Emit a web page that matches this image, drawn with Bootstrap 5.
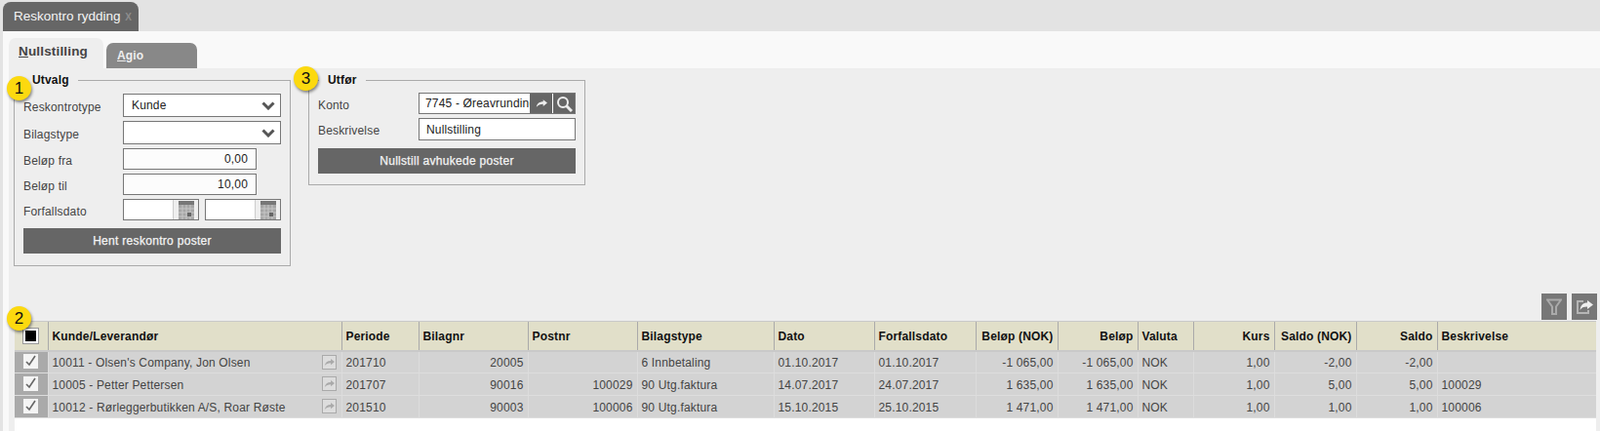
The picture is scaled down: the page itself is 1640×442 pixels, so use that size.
<!DOCTYPE html>
<html lang="nb">

<head>
  <meta charset="UTF-8">
  <meta name="viewport" content="width=device-width, initial-scale=1.0">
  <title>Reskontro rydding</title>
  <link rel="stylesheet" href="https://cdn.jsdelivr.net/npm/bootstrap@5.3.0/dist/css/bootstrap.min.css">
  <style>
    html, body { height: 100%; }
    body { background: #e3e3e3; font: 12px/14px "Liberation Sans", Arial, sans-serif; letter-spacing: .17px; color: #333; overflow: hidden; }

    /* top tab strip */
    .top-strip { height: 32px; padding: 2px 0 0 3px; }
    .top-tab { width: 139px; height: 30px; background: #666; color: #f4f4f4; border-radius: 8px 8px 0 0; font-size: 13.5px; letter-spacing: 0; line-height: 29px; padding-left: 11px; white-space: nowrap; }
    .top-tab .tab-x { color: #8d8d8d; font-size: 10px; font-weight: bold; margin-left: 1px; }

    .pane { margin-left: 3px; height: 410px; background: #f9f9f9; padding-left: 6px; }

    /* sub tabs */
    .sub-tabs { height: 38px; padding-top: 7px; border: 0; gap: 3px; align-items: flex-end; flex-wrap: nowrap; }
    .sub-tabs .nav-link { border: 0; border-radius: 7px 7px 0 0; margin: 0; }
    .sub-tabs .nav-link u { text-underline-offset: 1px; }
    .sub-tabs .tab-on { width: 97px; height: 31px; background: #eee; color: #444; font: bold 13.5px/28px "Liberation Sans", Arial, sans-serif; padding: 0 0 0 10px; }
    .sub-tabs .tab-off { width: 93px; height: 26px; background: #888; color: #eee; font: bold 12px/26px "Liberation Sans", Arial, sans-serif; padding: 0 0 0 11px; }

    .main-area { background: #eee; height: 372px; padding: 5px 0 0 5px; }

    /* the two boxes */
    .box { border: 1px solid #aaa; width: 284px; padding: 0 9px 0 9px; margin: 0; }
    .box-utvalg { height: 198px; }
    .box-utfor { width: 284px; height: 115px; margin-left: 18px; }
    .box legend { float: none; width: auto; font: bold 12px/14px "Liberation Sans", Arial, sans-serif; letter-spacing: .17px; color: #111; margin: 0 0 7px 0; padding: 0 9px 0 9px; }
    .box-utfor legend { margin-left: 1px; margin-bottom: 6px; }
    .field-row { display: flex; align-items: center; margin-bottom: 4px; color: #444; }
    .field-row label { width: 102px; flex: none; margin: 0; padding-top: 3px; }
    .box-utfor .field-row label { width: 103px; }

    .box .form-control, .box .form-select { border: 1px solid #777; border-radius: 0; font: 12px/14px "Liberation Sans", Arial, sans-serif; letter-spacing: .17px; color: #222; padding: 0 8px; box-shadow: none; min-height: 0; }
    .box .form-select { height: 24px; width: 162px; background-size: 14px 9px; background-position: right 5px center; background-image: url("data:image/svg+xml,%3csvg xmlns='http://www.w3.org/2000/svg' viewBox='0 0 14 9'%3e%3cpath fill='none' stroke='%23555' stroke-width='3' d='M1.5 1.5 7 7l5.5-5.5'/%3e%3c/svg%3e"); }
    .amount { width: 137px !important; height: 22px; text-align: right; background: #fcfcfc; }
    .date-input { width: 78px; height: 22px; border: 1px solid #777; background: #fff; display: flex; justify-content: flex-end; }
    .date-input + .date-input { margin-left: 6px; }
    .date-input span { width: 26px; background: #eee; border-left: 1px solid #ccc; display: flex; align-items: center; justify-content: center; }
    .dark-btn { background: #666; border: 0; border-radius: 0; color: #f4f4f4; font: 12px/26px "Liberation Sans", Arial, sans-serif; letter-spacing: .3px; -webkit-text-stroke: .25px #f4f4f4; height: 26px; width: 264px; padding: 0; display: block; }
    .dark-btn:hover { background: #666; color: #f4f4f4; }
    .lookup { width: 161px; height: 22px; border: 1px solid #777; background: #fff; display: flex; overflow: hidden; }
    .lookup input { border: 0 !important; height: 20px; width: 113px !important; flex: none; padding: 0 0 0 6px !important; }
    .lookup span { background: #666; width: 23px; display: flex; align-items: center; justify-content: center; }
    .lookup span + span { border-left: 1px solid #fff; }
    .lookup-text { width: 161px !important; height: 23px; padding-left: 7px !important; }

    /* numbered callouts */
    .callout { position: absolute; width: 25px; height: 25px; border-radius: 50%; background: #fcd90f; box-shadow: 1px 2px 3px rgba(0,0,0,.45); color: #111; font-size: 17px; line-height: 25px; text-align: center; z-index: 5; }
    .call-1 { left: 7px; top: 78px; }
    .call-2 { left: 7px; top: 314px; }
    .call-3 { left: 301px; top: 68px; }

    /* grid */
    .grid-tools { margin-top: 28px; height: 28px; justify-content: flex-end; gap: 5px; padding-right: 3px; }
    .grid-tools .tool-btn { width: 26px; height: 27px; background: #777; display: flex; align-items: center; justify-content: center; }
    .grid-wrap { margin-left: 1px; width: 1621px; background: #fff; height: 114px; }
    .grid { table-layout: fixed; width: 100%; margin: 0; font-size: 12px; color: #444; }
    .grid > :not(caption) > * > * { padding: 0 4px; background: transparent; box-shadow: none; white-space: nowrap; vertical-align: middle; border: 0; overflow: hidden; }
    .grid thead th { height: 30px; background: #e1dfc9; color: #111; font-weight: bold; border-top: 1px solid #c9c9c9; border-bottom: 2px solid #c9c9c9; border-left: 1px solid #aaa; padding-top: 1px; }
    .grid tbody td { height: 23px; background: #d3d3d3; border-bottom: 1px solid #ddd; border-left: 1px solid #dcdcdc; padding-top: 1px; }
    .grid th:nth-child(1) { width: 34px; }
    .grid th:nth-child(2) { width: 301px; }
    .grid th:nth-child(3) { width: 79px; }
    .grid th:nth-child(4), .grid th:nth-child(5) { width: 112px; }
    .grid th:nth-child(6) { width: 140px; }
    .grid th:nth-child(7) { width: 103px; }
    .grid th:nth-child(8) { width: 104px; }
    .grid th:nth-child(9) { width: 84px; }
    .grid th:nth-child(10) { width: 82px; }
    .grid th:nth-child(11) { width: 57px; }
    .grid th:nth-child(12), .grid th:nth-child(14) { width: 83px; }
    .grid th:nth-child(13) { width: 84px; }
    .grid .num { text-align: right; }
    .grid tbody .cell-check { background: #aaa; padding: 0 0 2px; text-align: center; border-left: 0; }
    .grid thead .cell-check { background: #e1dfc9; border-left: 0; padding: 0; text-align: center; }
    .grid .cell-name { position: relative; }
    .check-box { display: inline-flex; width: 15px; height: 15px; background: #f4f4f4; align-items: center; justify-content: center; vertical-align: middle; }
    .check-all { display: inline-block; width: 17px; height: 17px; border: 1px solid #999; background: #fff; padding: 2px; vertical-align: middle; }
    .check-all i { display: block; width: 11px; height: 11px; background: #000; }
    .row-link { position: absolute; right: 5px; top: 3px; width: 15px; height: 15px; border: 1px solid #aaa; background: #ddd; display: flex; align-items: center; justify-content: center; }
  </style>
</head>

<body>

  <div class="top-strip">
    <div class="top-tab">Reskontro rydding <span class="tab-x">X</span></div>
  </div>

  <div class="pane">
    <ul class="nav nav-tabs sub-tabs">
      <li class="nav-item"><a class="nav-link tab-on" href="#"><u>N</u>ullstilling</a></li>
      <li class="nav-item"><a class="nav-link tab-off" href="#"><u>A</u>gio</a></li>
    </ul>

    <div class="main-area">
      <div class="d-flex align-items-start">
        <fieldset class="box box-utvalg">
          <legend>Utvalg</legend>
          <div class="field-row">
            <label for="rtype">Reskontrotype</label>
            <select class="form-select" id="rtype"><option>Kunde</option></select>
          </div>
          <div class="field-row">
            <label for="btype">Bilagstype</label>
            <select class="form-select" id="btype"><option></option></select>
          </div>
          <div class="field-row">
            <label for="fra">Beløp fra</label>
            <input class="form-control amount" id="fra" value="0,00">
          </div>
          <div class="field-row">
            <label for="til">Beløp til</label>
            <input class="form-control amount" id="til" value="10,00">
          </div>
          <div class="field-row mb-2">
            <label>Forfallsdato</label>
            <div class="date-input"><span><svg width="16" height="19" viewBox="0 0 16 19"><rect width="16" height="19" fill="#a5a5a5"/><rect width="16" height="4" fill="#777"/><path d="M0 8h16M0 12h16M0 16h16M4 4v15M8 4v15M12 4v15" stroke="#c6c6c6"/><rect x="9" y="12" width="4" height="4" fill="#666"/></svg></span></div>
            <div class="date-input"><span><svg width="16" height="19" viewBox="0 0 16 19"><rect width="16" height="19" fill="#a5a5a5"/><rect width="16" height="4" fill="#777"/><path d="M0 8h16M0 12h16M0 16h16M4 4v15M8 4v15M12 4v15" stroke="#c6c6c6"/><rect x="9" y="12" width="4" height="4" fill="#666"/></svg></span></div>
          </div>
          <button type="button" class="btn dark-btn">Hent reskontro poster</button>
        </fieldset>

        <fieldset class="box box-utfor">
          <legend>Utfør</legend>
          <div class="field-row">
            <label for="konto">Konto</label>
            <div class="lookup">
              <input class="form-control" id="konto" value="7745 - Øreavrunding">
              <span><svg width="12" height="8" viewBox="0 0 14 9"><path fill="#eee" d="M9 0l5 4-5 4V5.500C5.500 5.500 3 6.500 1 9c.5-4 3.500-6.500 8-6.500z"/></svg></span>
              <span><svg width="17" height="17" viewBox="0 0 17 17"><circle cx="7" cy="7" r="5" fill="none" stroke="#eee" stroke-width="2"/><path d="M10.500 10.500 16 16" stroke="#eee" stroke-width="3"/></svg></span>
            </div>
          </div>
          <div class="field-row mb-2">
            <label for="besk">Beskrivelse</label>
            <input class="form-control lookup-text" id="besk" value="Nullstilling">
          </div>
          <button type="button" class="btn dark-btn">Nullstill avhukede poster</button>
        </fieldset>
      </div>

      <div class="d-flex grid-tools">
        <div class="tool-btn"><svg width="16" height="17" viewBox="0 0 16 17"><path fill="none" stroke="#aaa" stroke-width="2" d="M1 1.500h14L10 8.500V16H6V8.500z"/></svg></div>
        <div class="tool-btn"><svg width="18" height="17" viewBox="0 0 18 17"><path fill="none" stroke="#b5b5b5" stroke-width="2" d="M13 12v3H2V3h6"/><path fill="#eee" d="M12 2l6 4.500-6 4.500V8.500C8 8.500 6 9.500 4.500 12c.5-5 3-7.500 7.500-7.500z"/></svg></div>
      </div>

      <div class="grid-wrap">
        <table class="table grid">
          <thead>
            <tr>
              <th class="cell-check"><span class="check-all"><i></i></span></th>
              <th>Kunde/Leverandør</th>
              <th>Periode</th>
              <th>Bilagnr</th>
              <th>Postnr</th>
              <th>Bilagstype</th>
              <th>Dato</th>
              <th>Forfallsdato</th>
              <th class="num">Beløp (NOK)</th>
              <th class="num">Beløp</th>
              <th>Valuta</th>
              <th class="num">Kurs</th>
              <th class="num">Saldo (NOK)</th>
              <th class="num">Saldo</th>
              <th>Beskrivelse</th>
            </tr>
          </thead>
          <tbody>
            <tr>
              <td class="cell-check"><span class="check-box"><svg width="11" height="12" viewBox="0 0 11 12"><path fill="none" stroke="#666" stroke-width="1.600" d="M1 7l3 3 6-9"/></svg></span></td>
              <td class="cell-name">10011 - Olsen's Company, Jon Olsen<span class="row-link"><svg width="11" height="7" viewBox="0 0 14 9"><path fill="#aaa" d="M9 0l5 4-5 4V5.500C5.500 5.500 3 6.500 1 9c.5-4 3.500-6.500 8-6.500z"/></svg></span></td>
              <td>201710</td>
              <td class="num">20005</td>
              <td class="num"></td>
              <td>6 Innbetaling</td>
              <td>01.10.2017</td>
              <td>01.10.2017</td>
              <td class="num">-1 065,00</td>
              <td class="num">-1 065,00</td>
              <td>NOK</td>
              <td class="num">1,00</td>
              <td class="num">-2,00</td>
              <td class="num">-2,00</td>
              <td></td>
            </tr>
            <tr>
              <td class="cell-check"><span class="check-box"><svg width="11" height="12" viewBox="0 0 11 12"><path fill="none" stroke="#666" stroke-width="1.600" d="M1 7l3 3 6-9"/></svg></span></td>
              <td class="cell-name">10005 - Petter Pettersen<span class="row-link"><svg width="11" height="7" viewBox="0 0 14 9"><path fill="#aaa" d="M9 0l5 4-5 4V5.500C5.500 5.500 3 6.500 1 9c.5-4 3.500-6.500 8-6.500z"/></svg></span></td>
              <td>201707</td>
              <td class="num">90016</td>
              <td class="num">100029</td>
              <td>90 Utg.faktura</td>
              <td>14.07.2017</td>
              <td>24.07.2017</td>
              <td class="num">1 635,00</td>
              <td class="num">1 635,00</td>
              <td>NOK</td>
              <td class="num">1,00</td>
              <td class="num">5,00</td>
              <td class="num">5,00</td>
              <td>100029</td>
            </tr>
            <tr>
              <td class="cell-check"><span class="check-box"><svg width="11" height="12" viewBox="0 0 11 12"><path fill="none" stroke="#666" stroke-width="1.600" d="M1 7l3 3 6-9"/></svg></span></td>
              <td class="cell-name">10012 - Rørleggerbutikken A/S, Roar Røste<span class="row-link"><svg width="11" height="7" viewBox="0 0 14 9"><path fill="#aaa" d="M9 0l5 4-5 4V5.500C5.500 5.500 3 6.500 1 9c.5-4 3.500-6.500 8-6.500z"/></svg></span></td>
              <td>201510</td>
              <td class="num">90003</td>
              <td class="num">100006</td>
              <td>90 Utg.faktura</td>
              <td>15.10.2015</td>
              <td>25.10.2015</td>
              <td class="num">1 471,00</td>
              <td class="num">1 471,00</td>
              <td>NOK</td>
              <td class="num">1,00</td>
              <td class="num">1,00</td>
              <td class="num">1,00</td>
              <td>100006</td>
            </tr>
          </tbody>
        </table>
      </div>
    </div>
  </div>

  <div class="callout call-1">1</div>
  <div class="callout call-2">2</div>
  <div class="callout call-3">3</div>

  <script src="https://cdn.jsdelivr.net/npm/bootstrap@5.3.0/dist/js/bootstrap.bundle.min.js"></script>
</body>

</html>
